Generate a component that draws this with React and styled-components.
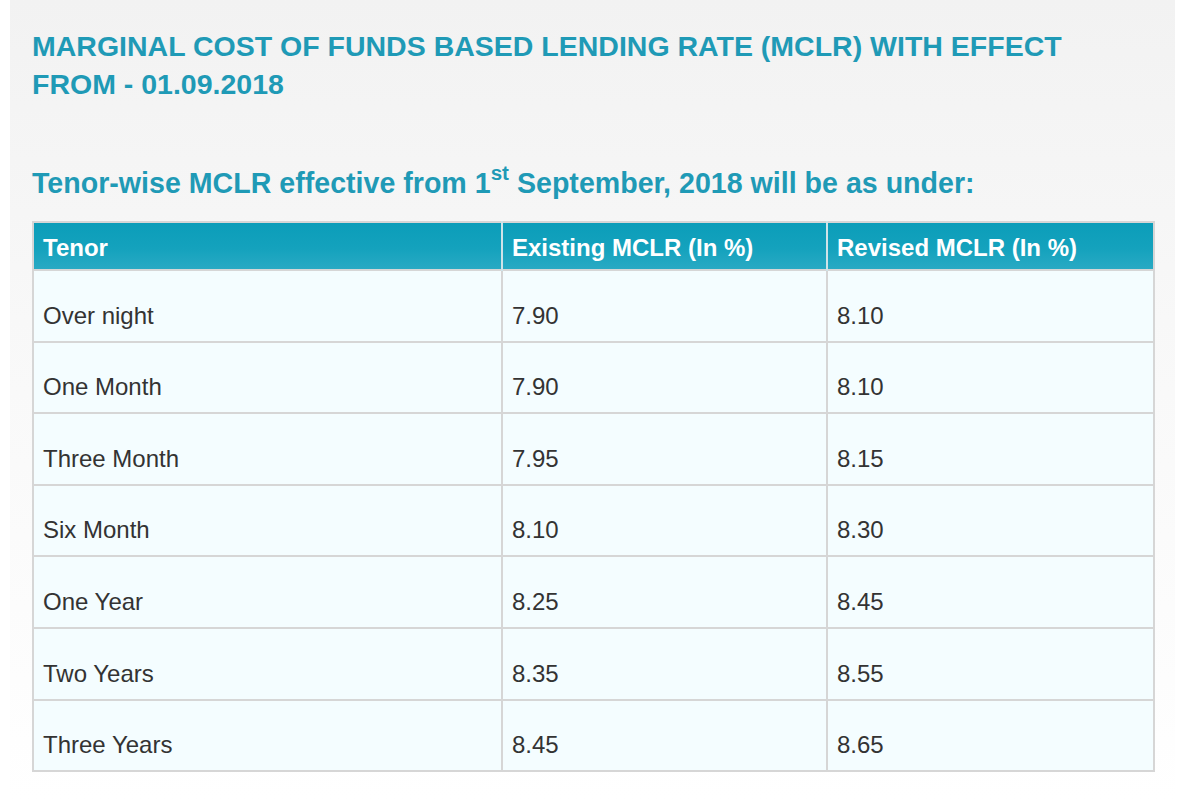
import React from "react";
import styled, { createGlobalStyle } from "styled-components";

const Global = createGlobalStyle`
  html, body { margin: 0; padding: 0; background: #ffffff; }
  body { font-family: "Liberation Sans", Arial, sans-serif; }
`;

const Page = styled.div`
  width: 1200px;
  height: 800px;
  padding: 0 25px 0 10px;
  box-sizing: border-box;
  background: #ffffff;
`;

const Panel = styled.section`
  height: 100%;
  box-sizing: border-box;
  padding: 27px 22px 0 22px;
  background: linear-gradient(to bottom, #f2f2f2 0%, #f8f8f8 40%, #fdfdfd 85%, #ffffff 100%);
`;

const Title = styled.h1`
  margin: 0;
  max-width: 1100px;
  font-size: 28.5px;
  line-height: 38px;
  font-weight: bold;
  color: #1f9ab6;
`;

const Subtitle = styled.h2`
  margin: 60px 0 0 0;
  font-size: 28.6px;
  line-height: 40px;
  font-weight: bold;
  color: #1f9ab6;

  sup {
    font-size: 0.72em;
    line-height: 0;
    position: relative;
    top: -0.12em;
  }
`;

const Table = styled.table`
  margin-top: 18px;
  width: 1121px;
  border-collapse: collapse;
  border: 2px solid #d6d6d6;
  table-layout: fixed;
`;

const HeadRow = styled.tr`
  background: linear-gradient(to bottom, #0b9db9 0%, #14a2bd 55%, #2aaac4 100%);
`;

const HeadCell = styled.th`
  height: 48px;
  padding: 4px 9px 0 9px;
  box-sizing: border-box;
  text-align: left;
  font-size: 24px;
  font-weight: bold;
  color: #ffffff;
  border-left: 2px solid #cfe3e8;
  &:first-child { border-left: none; }
`;

const Row = styled.tr`
  background: #f4fdff;
  border-top: 2px solid #d6d6d6;
`;

const Cell = styled.td`
  height: 71.6px;
  padding: 0 9px 11px 9px;
  box-sizing: border-box;
  vertical-align: bottom;
  font-size: 24px;
  line-height: 28px;
  color: #333333;
  border-left: 2px solid #d6d6d6;
  &:first-child { border-left: none; }
`;

const rows = [
  ["Over night", "7.90", "8.10"],
  ["One Month", "7.90", "8.10"],
  ["Three Month", "7.95", "8.15"],
  ["Six Month", "8.10", "8.30"],
  ["One Year", "8.25", "8.45"],
  ["Two Years", "8.35", "8.55"],
  ["Three Years", "8.45", "8.65"],
];

export default function App() {
  return (
    <>
      <Global />
      <Page>
        <Panel>
          <Title>MARGINAL COST OF FUNDS BASED LENDING RATE (MCLR) WITH EFFECT FROM - 01.09.2018</Title>
          <Subtitle>
            Tenor-wise MCLR effective from 1<sup>st</sup> September, 2018 will be as under:
          </Subtitle>
          <Table>
            <colgroup>
              <col style={{ width: "469px" }} />
              <col style={{ width: "325px" }} />
              <col style={{ width: "327px" }} />
            </colgroup>
            <thead>
              <HeadRow>
                <HeadCell>Tenor</HeadCell>
                <HeadCell>Existing MCLR (In %)</HeadCell>
                <HeadCell>Revised MCLR (In %)</HeadCell>
              </HeadRow>
            </thead>
            <tbody>
              {rows.map((r) => (
                <Row key={r[0]}>
                  {r.map((c, i) => (
                    <Cell key={i}>{c}</Cell>
                  ))}
                </Row>
              ))}
            </tbody>
          </Table>
        </Panel>
      </Page>
    </>
  );
}
